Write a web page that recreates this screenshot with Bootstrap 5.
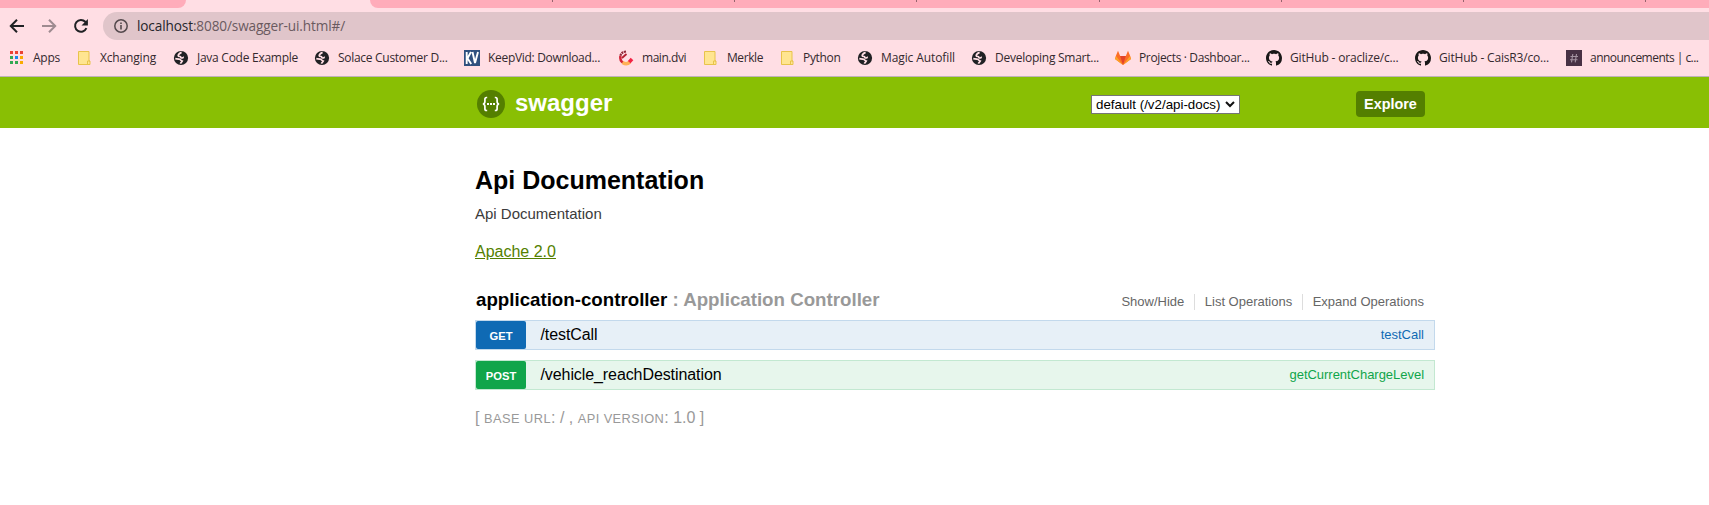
<!DOCTYPE html>
<html lang="en">
<head>
<meta charset="utf-8">
<title>Swagger UI</title>
<link href="https://cdn.jsdelivr.net/npm/bootstrap@5.3.0/dist/css/bootstrap.min.css" rel="stylesheet">
<style>
body{font-family:"Liberation Sans",Arial,sans-serif;font-size:16px;line-height:1.2;color:#000;background:#fff;overflow:hidden}
svg{display:block;flex:none}
.chrome-ui{background:#ffdee4;height:77px;border-bottom:1px solid #bfb4b8;font-family:"Open Sans","Noto Sans",sans-serif}
.tabs{height:8px}
.tabs .seg{background:#ffacba;height:8px}
.seg-l{width:186px;flex:none;border-bottom-right-radius:8px}
.seg-r{margin-left:184px;min-width:0;border-bottom-left-radius:8px;padding-left:182px}
.seg-r i{width:1px;height:2px;background:#96646e;margin-right:181.2px;flex:none}
.toolbar{height:32px;margin-top:4px;padding-left:8px}
.toolbar .omni{background:#e0c5ca;height:28px;border-radius:14px 0 0 14px;padding-left:11px;gap:9px;color:#6a5a5f;font-size:13.6px}
.omni b{font-weight:400;color:#26252a}
.marks{height:32px;margin-top:-2px;padding-left:9px;font-size:12px;color:#34292e}
.bm{gap:8px;flex:none;white-space:nowrap;line-height:16px}
.hdr{background:#89bf04;height:51px}
.hdr,.main{padding-left:475px}
.wrap{width:960px}
.brandname{font-size:24px;font-weight:700;margin:2px 0 0 10px}
.api-select{width:149px;height:19px;border:1px solid #767676;background:#fff;color:#000;font-size:13.333px;padding:0 4px 0 4px;line-height:17px}
.explore{background:#547f00;color:#fff;font-size:14.4px;font-weight:700;width:69px;height:26px;border-radius:4px;border:0;padding:0;margin-left:116px;margin-right:10px;line-height:26px}
h1{font-size:25px;font-weight:700;line-height:30px;margin:37px 0 0}
.desc{font-size:15px;color:#3b3b3b;line-height:18px;margin:10px 0 0}
.lic{color:#547f00;line-height:20px;margin-top:19px}
h2{font-size:18.72px;font-weight:700;line-height:22px;margin:0 0 0 1px;color:#999}
h2 span{color:#000}
.reshead{margin-top:27px;height:31px;padding-right:11px}
.opts{font-size:13px;color:#666;line-height:16px;margin-top:5px}
.opts span+span{border-left:1px solid #ddd;padding-left:10px;margin-left:9.5px}
.op{height:30px;border:1px solid #c3d9ec;background:#e7f0f7;margin-bottom:10px;padding-right:10px}
.op .verb{width:50px;height:28px;border-radius:2px;background:#0f6ab4;color:#fff;font-size:11.2px;font-weight:700;line-height:30px}
.op .path{margin-left:14.500px;line-height:28px}
.op .nick{font-size:13px;color:#0f6ab4;line-height:27px}
.op.post{border-color:#c3e8d1;background:#e7f6ec}
.op.post .verb{background:#10a54a}
.op.post .nick{color:#10a54a}
.foot{color:#999;height:20px;line-height:20px;margin-top:18px;white-space:pre}
.foot span{font-size:12.8px;display:inline-block;line-height:16px}
</style>
</head>
<body>
<svg width="0" height="0" class="position-absolute">
  <defs>
    <symbol id="globe" viewBox="0 0 16 16"><circle cx="8" cy="8" r="7.1" fill="#202124"/><path d="M8.6 2.4C7 3 5.4 4.200 5.200 5.700c0 .8 1 .8 1.800.8.900.1.700 1.500 1.700 1.500 1 0 1.200-.8 2.200-.6M2.300 8.700c1.500.2 3.600 0 4.700.7 1.100.6.9 1.500 2.300 1.700-.4 1.200-1.500 1.400-1.900 2.500" fill="none" stroke="#ffdee4" stroke-width="1.7"/></symbol>
    <symbol id="folder" viewBox="0 0 16 16"><path d="M2.500 1.500h10.500v9.500h1v3.500h-11.500z" fill="#ffe591" stroke="#e8c34b"/><path d="M11.500 14v-3h2.500" fill="none" stroke="#e8c34b"/></symbol>
    <symbol id="github" viewBox="0 0 16 16"><path fill="#191717" d="M8 0C3.580 0 0 3.580 0 8c0 3.540 2.290 6.530 5.470 7.590.4.070.55-.17.55-.38 0-.19-.01-.82-.01-1.490-2.010.37-2.530-.49-2.690-.94-.09-.23-.48-.94-.82-1.130-.28-.15-.68-.52-.01-.53.63-.01 1.080.58 1.230.82.72 1.210 1.870.87 2.330.66.070-.52.28-.87.51-1.070-1.780-.2-3.640-.89-3.640-3.950 0-.87.31-1.590.82-2.150-.08-.2-.36-1.020.08-2.120 0 0 .67-.21 2.200.82.64-.18 1.320-.27 2-.27s1.360.09 2 .27c1.530-1.040 2.200-.82 2.200-.82.44 1.100.16 1.920.08 2.120.51.56.82 1.270.82 2.150 0 3.070-1.870 3.750-3.650 3.950.29.25.54.73.54 1.480 0 1.070-.01 1.930-.01 2.200 0 .21.15.46.55.38A8.010 8.010 0 0 0 16 8c0-4.420-3.580-8-8-8z"/></symbol>
  </defs>
</svg>
<div class="chrome-ui">
  <div class="tabs d-flex"><div class="seg seg-l"></div><div class="seg seg-r d-flex flex-grow-1 overflow-hidden"><i></i><i></i><i></i><i></i><i></i><i></i><i></i></div></div>
  <div class="toolbar d-flex align-items-start">
    <div class="d-flex align-items-center" style="height:28px">
      <svg width="18" height="18" viewBox="0 0 18 18" fill="none" stroke="#202124" stroke-width="2"><path d="M16 9H3.500M9 2.800 2.800 9 9 15.200"/></svg>
      <svg class="ms-3" width="16" height="18" viewBox="0 0 16 18" fill="none" stroke="#9e8b90" stroke-width="2"><path d="M0 9h12.500M7 2.800 13.200 9 7 15.200"/></svg>
      <svg style="margin-left:15px" width="16" height="16" viewBox="0 0 16 16"><path d="M13.400 10.200A5.900 5.900 0 1 1 12.300 3.800L14 5.400" fill="none" stroke="#202124" stroke-width="2"/><path d="M14.900 1v6.500H8.500z" fill="#202124"/></svg>
      <span style="width:14px"></span>
    </div>
    <div class="omni d-flex align-items-center flex-grow-1">
      <svg width="14" height="14" viewBox="0 0 14 14"><circle cx="7" cy="7" r="6.200" fill="none" stroke="#54494d" stroke-width="1.500"/><path d="M6.200 6.100h1.600v4.300H6.200zM6.200 3.500h1.600v1.500H6.200z" fill="#54494d"/></svg>
      <span data-fit="208"><b>localhost</b>:8080/swagger-ui.html#/</span>
    </div>
  </div>
  <div class="marks d-flex align-items-center">
    <div class="bm d-flex" style="width:67px"><svg width="16" height="16"><g fill="#ea4335"><path d="M1 1h3v3H1zM6 1h3v3H6z"/><path d="M11 1h3v3h-3z"/></g><path d="M1 6h3v3H1zM1 11h3v3H1zM6 11h3v3H6z" fill="#34a853"/><path d="M6 6h3v3H6z" fill="#1a86f0"/><path d="M11 6h3v3h-3zM11 11h3v3h-3z" fill="#f9ab00"/></svg><span data-fit="27">Apps</span></div>
    <div class="bm d-flex" style="width:97px"><svg width="16" height="16"><use href="#folder"/></svg><span data-fit="56">Xchanging</span></div>
    <div class="bm d-flex" style="width:141px"><svg width="16" height="16"><use href="#globe"/></svg><span data-fit="101">Java Code Example</span></div>
    <div class="bm d-flex" style="width:150px"><svg width="16" height="16"><use href="#globe"/></svg><span data-fit="109.500">Solace Customer D...</span></div>
    <div class="bm d-flex" style="width:154px"><svg width="16" height="16"><path d="M0 0h16v16H0z" fill="#30507e"/><path d="M2.700 2v12M7 2 3.500 8.200 7.200 14M8.500 2l2.500 11 3-11" fill="none" stroke="#fff" stroke-width="1.900"/></svg><span data-fit="112">KeepVid: Download...</span></div>
    <div class="bm d-flex" style="width:85px"><svg width="16" height="16" fill="none"><path d="M8 1.500C4.500 2 2.800 3.700 2.400 6" stroke="#912939" stroke-width="2.200" stroke-dasharray="2 .7"/><path d="M8.500 4 4 8" stroke="#b22030" stroke-width="1.800"/><path d="M2.400 6c-.5 3 .5 5.500 3 7" stroke="#d32336" stroke-width="2.500"/><path d="M4.500 12.600c3 1.800 5.500 1.500 7.300-.6" stroke="#ffb057" stroke-width="3.500"/><path d="M11.200 12.200 14 9" stroke="#f22345" stroke-width="3.500"/></svg><span data-fit="44">main.dvi</span></div>
    <div class="bm d-flex" style="width:76px"><svg width="16" height="16"><use href="#folder" x="-1"/></svg><span data-fit="36">Merkle</span></div>
    <div class="bm d-flex" style="width:78px"><svg width="16" height="16"><use href="#folder"/></svg><span data-fit="37.500">Python</span></div>
    <div class="bm d-flex" style="width:114px"><svg width="16" height="16"><use href="#globe"/></svg><span data-fit="74">Magic Autofill</span></div>
    <div class="bm d-flex" style="width:144px"><svg width="16" height="16"><use href="#globe"/></svg><span data-fit="104">Developing Smart...</span></div>
    <div class="bm d-flex" style="width:151px"><svg width="16" height="16"><path d="M8 15 0 9l1-3.500L3 .8 5.200 6h5.600L13 .8l2 4.700L16 9z" fill="#fc6d26"/><path d="M8 15 5.200 6h5.600z" fill="#e24329"/><path d="M8 15 0 9l1-3z M8 15l8-6-1-3z" fill="#fca326"/></svg><span data-fit="110.500">Projects · Dashboar...</span></div>
    <div class="bm d-flex" style="width:149px"><svg width="16" height="16"><use href="#github"/></svg><span data-fit="108.500">GitHub - oraclize/c...</span></div>
    <div class="bm d-flex" style="width:151px"><svg width="16" height="16"><use href="#github"/></svg><span data-fit="110">GitHub - CaisR3/co...</span></div>
    <div class="bm d-flex" style="width:143px"><svg width="16" height="16"><path d="M0 0h16v16H0z" fill="#483144"/><path d="M6.800 4 5.500 12.300M10.500 4 9.200 12.300M4.500 6.500h7.500M4 9.800h7.500" stroke="#a493a1" stroke-width="1.100"/></svg><span data-fit="108.500">announcements | c...</span></div>
  </div>
</div>

<header class="hdr">
  <div class="wrap h-100 d-flex align-items-center">
    <svg style="margin-top:3px" width="30" height="30" viewBox="0 0 30 30"><circle cx="16" cy="15" r="14" fill="#547f00"/><g fill="none" stroke="#fff" stroke-width="1.700"><path d="M12.200 8.500h-.7c-1.300 0-1.600.7-1.600 1.800v2.200c0 1.500-.5 2.300-2 2.500 1.500.2 2 1 2 2.500v2.200c0 1.100.3 1.800 1.600 1.800h.7M19.800 8.500h.7c1.300 0 1.600.7 1.600 1.800v2.200c0 1.500.5 2.300 2 2.500-1.500.2-2 1-2 2.500v2.200c0 1.100-.3 1.800-1.600 1.800h-.7"/></g><path d="M12 14h2v2h-2zM15 14h2v2h-2zM18 14h2v2h-2z" fill="#fff"/></svg>
    <span class="brandname text-white">swagger</span>
    <div class="api-select ms-auto d-flex align-items-center justify-content-between" style="margin-top:3px"><span>default (/v2/api-docs)</span><svg width="10" height="8" viewBox="0 0 10 8"><path d="M1 2l4 4 4-4" fill="none" stroke="#111" stroke-width="2"/></svg></div>
    <button class="explore btn" style="margin-top:3px">Explore</button>
  </div>
</header>

<main class="main">
  <div class="wrap">
    <h1>Api Documentation</h1>
    <p class="desc">Api Documentation</p>
    <div class="lic"><span class="text-decoration-underline">Apache 2.0</span></div>
    <div class="reshead d-flex justify-content-between align-items-start">
      <h2><span>application-controller</span> : Application Controller</h2>
      <div class="opts d-flex"><span>Show/Hide</span><span>List Operations</span><span>Expand Operations</span></div>
    </div>
    <div class="op d-flex"><span class="verb text-center">GET</span><span class="path" data-fit="57">/testCall</span><span class="nick ms-auto">testCall</span></div>
    <div class="op post d-flex"><span class="verb text-center">POST</span><span class="path" data-fit="181">/vehicle_reachDestination</span><span class="nick ms-auto" data-fit="134.500">getCurrentChargeLevel</span></div>
    <div class="foot">[ <span data-fit="67.200">BASE URL</span>: / , <span data-fit="86.500">API VERSION</span>: 1.0 ]</div>
  </div>
</main>
<script src="https://cdn.jsdelivr.net/npm/bootstrap@5.3.0/dist/js/bootstrap.bundle.min.js"></script>
<script>
// Spread each label evenly over its intended width
document.querySelectorAll('[data-fit]').forEach(function (el) {
  var w = el.getBoundingClientRect().width;
  el.style.letterSpacing = ((parseFloat(el.dataset.fit) - w) / el.textContent.length) + 'px';
});
</script>
</body>
</html>
